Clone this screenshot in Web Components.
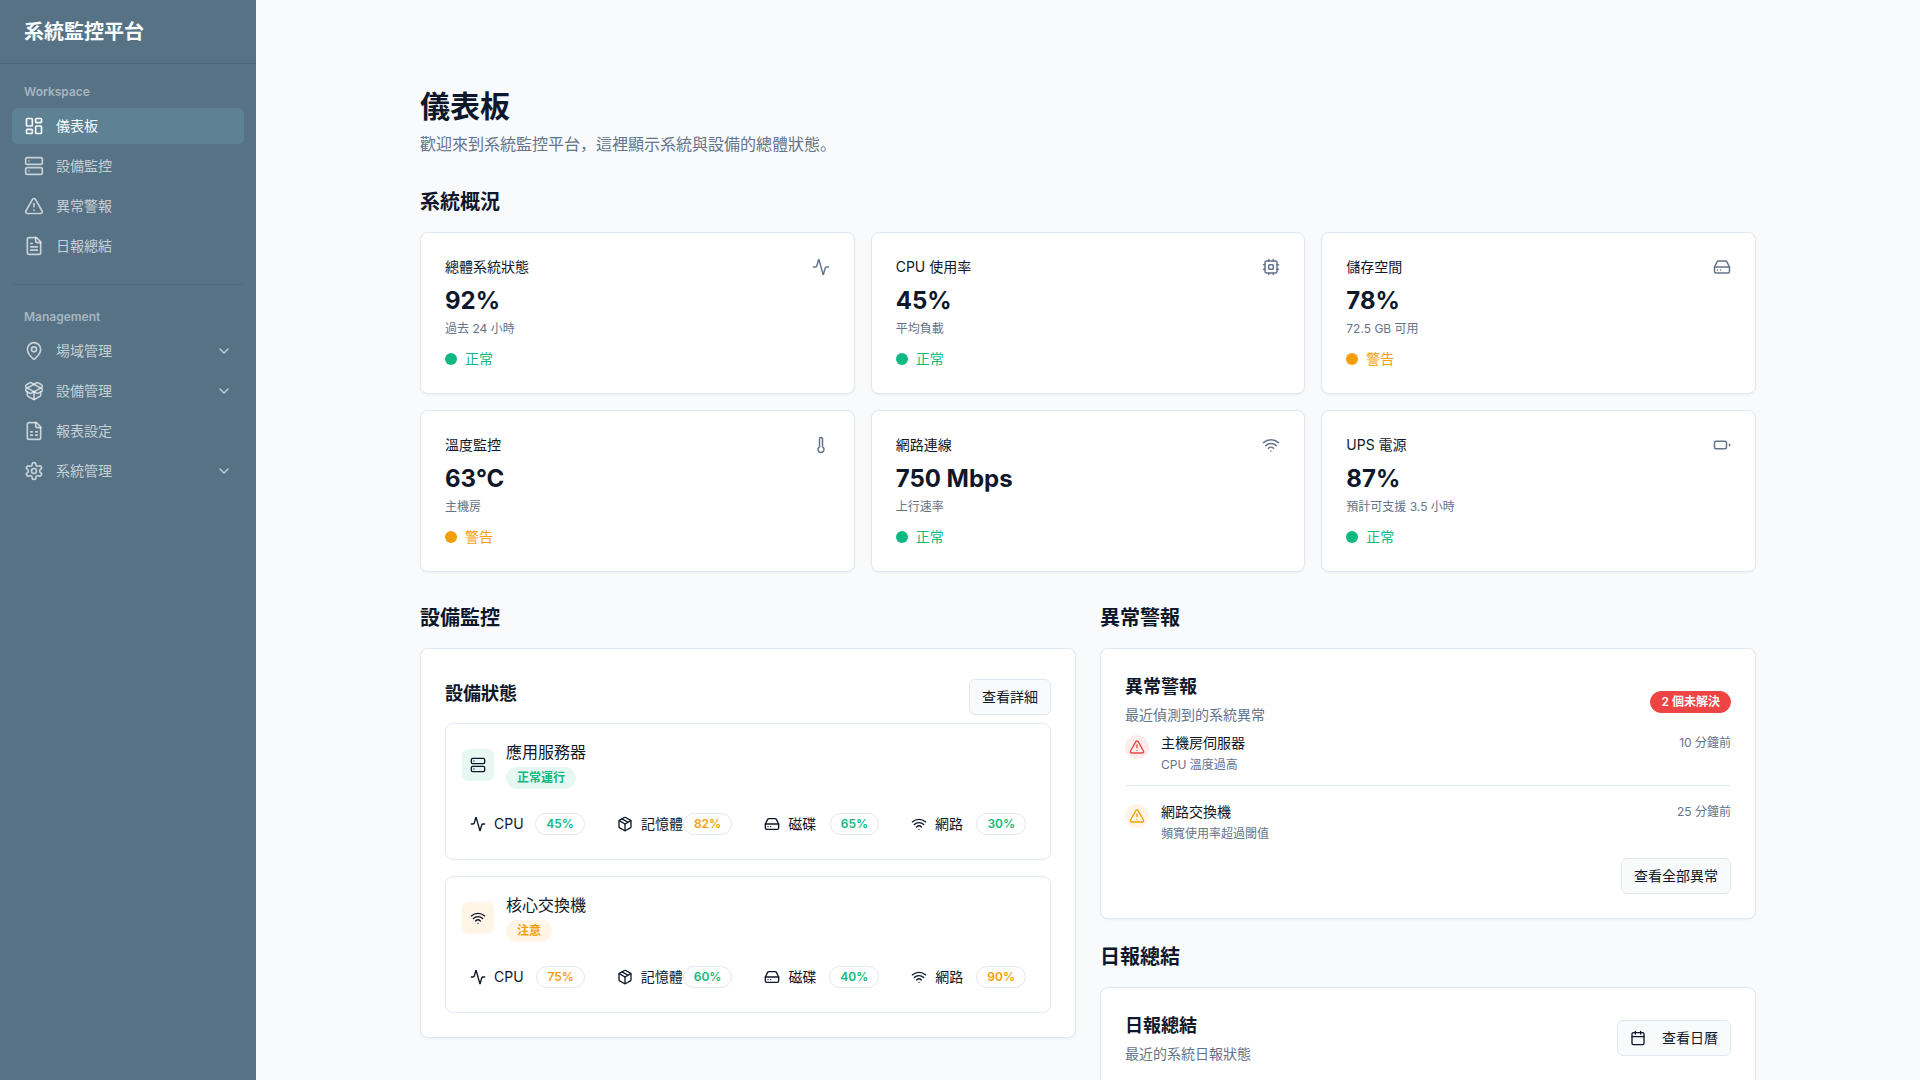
<!DOCTYPE html>
<html lang="en">
<head>
<meta charset="utf-8">
<meta name="viewport" content="width=device-width, initial-scale=1">
<title>系統監控平台</title>
<style>
    :root {
        --background: #f8fafc;
        --foreground: #0f172a;
        --card: #ffffff;
        --border: #e2e8f0;
        --muted: #64748b;
        --sidebar: #567284;
        --sidebar-active: #5e8193;
        --sidebar-border: #4b667a;
        --sidebar-divider: #506c7e;
        --success: #10b981;
        --success-soft: #e7f8f2;
        --warning: #f59e0b;
        --warning-soft: #fef5e7;
        --danger: #ef4444;
        --danger-soft: #fdecec;
    }

    body {
        margin: 0;
        background: var(--background);
        color: var(--foreground);
        font-family: Inter, "Noto Sans CJK JP", sans-serif;
        font-size: 14px;
        line-height: 20px;
    }
</style>
</head>
<body>
<dashboard-app></dashboard-app>

<script>
const ICONS = {
    dashboard: '<rect x="3" y="3" width="7" height="9" rx="1"/><rect x="14" y="3" width="7" height="5" rx="1"/><rect x="14" y="12" width="7" height="9" rx="1"/><rect x="3" y="16" width="7" height="5" rx="1"/>',
    server: '<rect x="2" y="2" width="20" height="8" rx="2"/><rect x="2" y="14" width="20" height="8" rx="2"/><path d="M6 6h.01M6 18h.01"/>',
    alert: '<path d="m21.73 18-8-14a2 2 0 0 0-3.48 0l-8 14A2 2 0 0 0 4 21h16a2 2 0 0 0 1.73-3"/><path d="M12 9v4M12 17h.01"/>',
    file: '<path d="M15 2H6a2 2 0 0 0-2 2v16a2 2 0 0 0 2 2h12a2 2 0 0 0 2-2V7Z"/><path d="M14 2v4a2 2 0 0 0 2 2h4M10 9H8M16 13H8M16 17H8"/>',
    sheet: '<path d="M15 2H6a2 2 0 0 0-2 2v16a2 2 0 0 0 2 2h12a2 2 0 0 0 2-2V7Z"/><path d="M14 2v4a2 2 0 0 0 2 2h4M8 13h2M14 13h2M8 17h2M14 17h2"/>',
    pin: '<path d="M20 10c0 4.993-5.539 10.193-7.399 11.799a1 1 0 0 1-1.202 0C9.539 20.193 4 14.993 4 10a8 8 0 0 1 16 0"/><circle cx="12" cy="10" r="3"/>',
    boxOpen: '<path d="M12 22v-9"/><path d="M15.17 2.21a1.67 1.67 0 0 1 1.63 0L21 4.57a1.93 1.93 0 0 1 0 3.36L8.82 14.79a1.655 1.655 0 0 1-1.64 0L3 12.43a1.93 1.93 0 0 1 0-3.36z"/><path d="M20 13v3.87a2.06 2.06 0 0 1-1.11 1.83l-6 3.08a1.93 1.93 0 0 1-1.78 0l-6-3.08A2.06 2.06 0 0 1 4 16.87V13"/><path d="M21 12.43a1.93 1.93 0 0 0 0-3.36L8.83 2.2a1.64 1.64 0 0 0-1.63 0L3 4.57a1.93 1.93 0 0 0 0 3.36l12.18 6.86a1.636 1.636 0 0 0 1.63 0z"/>',
    settings: '<path d="M12.22 2h-.44a2 2 0 0 0-2 2v.18a2 2 0 0 1-1 1.73l-.43.25a2 2 0 0 1-2 0l-.15-.08a2 2 0 0 0-2.73.73l-.22.38a2 2 0 0 0 .73 2.73l.15.1a2 2 0 0 1 1 1.72v.51a2 2 0 0 1-1 1.74l-.15.09a2 2 0 0 0-.73 2.73l.22.38a2 2 0 0 0 2.73.73l.15-.08a2 2 0 0 1 2 0l.43.25a2 2 0 0 1 1 1.73V20a2 2 0 0 0 2 2h.44a2 2 0 0 0 2-2v-.18a2 2 0 0 1 1-1.73l.43-.25a2 2 0 0 1 2 0l.15.08a2 2 0 0 0 2.73-.73l.22-.39a2 2 0 0 0-.73-2.73l-.15-.08a2 2 0 0 1-1-1.74v-.5a2 2 0 0 1 1-1.74l.15-.09a2 2 0 0 0 .73-2.73l-.22-.38a2 2 0 0 0-2.73-.73l-.15.08a2 2 0 0 1-2 0l-.43-.25a2 2 0 0 1-1-1.73V4a2 2 0 0 0-2-2z"/><circle cx="12" cy="12" r="3"/>',
    chevron: '<path d="m6 9 6 6 6-6"/>',
    activity: '<path d="M22 12h-2.48a2 2 0 0 0-1.93 1.46l-2.35 8.36a.25.25 0 0 1-.48 0L9.24 2.18a.25.25 0 0 0-.48 0l-2.35 8.36A2 2 0 0 1 4.49 12H2"/>',
    cpu: '<rect x="4" y="4" width="16" height="16" rx="2"/><rect x="9" y="9" width="6" height="6" rx="1"/><path d="M15 2v2M15 20v2M2 15h2M2 9h2M20 15h2M20 9h2M9 2v2M9 20v2"/>',
    drive: '<path d="M22 12H2"/><path d="M5.45 5.11 2 12v6a2 2 0 0 0 2 2h16a2 2 0 0 0 2-2v-6l-3.45-6.89A2 2 0 0 0 16.76 4H7.24a2 2 0 0 0-1.79 1.11z"/><path d="M6 16h.01M10 16h.01"/>',
    thermometer: '<path d="M14 4v10.54a4 4 0 1 1-4 0V4a2 2 0 0 1 4 0Z"/>',
    wifi: '<path d="M12 20h.01M2 8.82a15 15 0 0 1 20 0M5 12.859a10 10 0 0 1 14 0M8.5 16.429a5 5 0 0 1 7 0"/>',
    battery: '<rect x="2" y="7" width="16" height="10" rx="2"/><path d="M22 11v2"/>',
    memory: '<path d="M11 21.73a2 2 0 0 0 2 0l7-4A2 2 0 0 0 21 16V8a2 2 0 0 0-1-1.73l-7-4a2 2 0 0 0-2 0l-7 4A2 2 0 0 0 3 8v8a2 2 0 0 0 1 1.73z"/><path d="M12 22V12"/><path d="m3.3 7 8.7 5 8.7-5M7.5 4.27l9 5.15"/>',
    calendar: '<path d="M8 2v4M16 2v4M3 10h18"/><rect x="3" y="4" width="18" height="18" rx="2"/>'
};

class BaseElement extends HTMLElement {
    constructor() {
        super();
        this.attachShadow( { mode: 'open' } );
    }

    attr( name ) { return this.getAttribute( name ) || ''; }

    getTemplate() {
        const template = document.createElement( 'template' );
        template.innerHTML = `
            <style>
                *, :host { box-sizing: border-box; }
                h1, h2, h3, h4, p { margin: 0; }
                ${this.getStyles()}
            </style>
            ${this.getMarkup()}
        `
        return template;
    }

    getStyles() { return ''; }

    getMarkup() { return '<slot></slot>'; }

    connectedCallback() {
        if ( this.shadowRoot.childNodes.length ) return;
        this.shadowRoot.appendChild( this.getTemplate().content.cloneNode( true ) );
    }
}

class UiIcon extends BaseElement {
    getStyles() {
        return `
            :host { display: block; flex: none; width: var(--icon-size, 16px); height: var(--icon-size, 16px); }
            svg { display: block; width: 100%; height: 100%; }
        `
    }

    getMarkup() {
        return `
            <svg viewBox="0 0 24 24" fill="none" stroke="currentColor" stroke-width="2"
                stroke-linecap="round" stroke-linejoin="round" aria-hidden="true">${ICONS[this.attr( 'name' )]}</svg>
        `
    }
}

class UiButton extends BaseElement {
    getStyles() {
        return `
            :host { display: block; flex: none; }
            button {
                display: flex;
                align-items: center;
                gap: 16px;
                height: 36px;
                padding: 0 12px;
                border: 1px solid var(--border);
                border-radius: 6px;
                background: var(--background);
                color: var(--foreground);
                font: inherit;
                cursor: pointer;
            }
        `
    }

    getMarkup() {
        const icon = this.attr( 'icon' );
        return `<button type="button">${icon ? `<ui-icon name="${icon}"></ui-icon>` : ''}<slot></slot></button>`
    }
}

class UiBadge extends BaseElement {
    getStyles() {
        return `
            :host {
                display: inline-block;
                flex: none;
                padding: 2px 10px;
                border: 1px solid var(--border);
                border-radius: 11px;
                font-size: 12px;
                line-height: 16px;
                font-weight: 600;
                white-space: nowrap;
            }
            :host([tone="success"]) { color: var(--success); }
            :host([tone="warning"]) { color: var(--warning); }
            :host([soft]) { border-color: transparent; }
            :host([soft][tone="success"]) { background: var(--success-soft); }
            :host([soft][tone="warning"]) { background: var(--warning-soft); }
            :host([tone="danger"]) { background: var(--danger); border-color: var(--danger); color: #f8fafc; }
        `
    }
}

class NavItem extends BaseElement {
    getStyles() {
        return `
            :host { display: block; }
            a, button {
                display: flex;
                align-items: center;
                gap: 12px;
                width: 100%;
                height: 36px;
                padding: 0 12px;
                border: 0;
                border-radius: 6px;
                background: none;
                color: rgba(248, 250, 252, 0.7);
                font: inherit;
                text-align: left;
                text-decoration: none;
                cursor: pointer;
            }
            :host([active]) a { background: var(--sidebar-active); color: #f8fafc; }
            .icon { --icon-size: 20px; }
            .label { flex: 1; }
        `
    }

    getMarkup() {
        const content = `
            <ui-icon class="icon" name="${this.attr( 'icon' )}"></ui-icon>
            <span class="label"><slot></slot></span>
        `
        if ( this.hasAttribute( 'expandable' ) ) {
            return `<button type="button" aria-expanded="false">${content}<ui-icon name="chevron"></ui-icon></button>`
        }
        return `<a href="#${this.attr( 'icon' )}">${content}</a>`
    }
}

class NavGroup extends BaseElement {
    getStyles() {
        return `
            :host { display: block; padding: 20px 0; }
            :host([divided]) { padding-top: 24px; border-top: 1px solid var(--sidebar-divider); }
            .label {
                padding: 0 12px;
                margin-bottom: 8px;
                color: rgba(248, 250, 252, 0.5);
                font-size: 12px;
                line-height: 16px;
                font-weight: 600;
            }
            .items { display: grid; gap: 4px; }
        `
    }

    getMarkup() {
        return `
            <p class="label">${this.attr( 'label' )}</p>
            <div class="items"><slot></slot></div>
        `
    }
}

class SideBar extends BaseElement {
    getStyles() {
        return `
            :host { display: block; width: 256px; flex: none; background: var(--sidebar); }
            header {
                display: flex;
                align-items: center;
                height: 64px;
                padding: 0 24px;
                border-bottom: 1px solid var(--sidebar-border);
                color: #f8fafc;
                font-size: 20px;
                line-height: 28px;
                font-weight: 700;
            }
            nav { padding: 0 12px; }
        `
    }

    getMarkup() {
        return `
            <header>系統監控平台</header>
            <nav>
                <nav-group label="Workspace">
                    <nav-item icon="dashboard" active>儀表板</nav-item>
                    <nav-item icon="server">設備監控</nav-item>
                    <nav-item icon="alert">異常警報</nav-item>
                    <nav-item icon="file">日報總結</nav-item>
                </nav-group>
                <nav-group label="Management" divided>
                    <nav-item icon="pin" expandable>場域管理</nav-item>
                    <nav-item icon="boxOpen" expandable>設備管理</nav-item>
                    <nav-item icon="sheet">報表設定</nav-item>
                    <nav-item icon="settings" expandable>系統管理</nav-item>
                </nav-group>
            </nav>
        `
    }
}

class PageSection extends BaseElement {
    getStyles() {
        return `
            :host { display: block; }
            h2 { margin-bottom: 16px; font-size: 20px; line-height: 28px; font-weight: 600; }
        `
    }

    getMarkup() { return `<h2>${this.attr( 'heading' )}</h2><slot></slot>` }
}

class UiCard extends BaseElement {
    getStyles() {
        return `
            :host {
                display: block;
                padding: 24px;
                border: 1px solid var(--border);
                border-radius: 8px;
                background: var(--card);
                box-shadow: 0 1px 2px rgba(0, 0, 0, 0.05);
            }
            header { display: flex; align-items: center; justify-content: space-between; margin-bottom: 8px; }
            h3 { font-size: 18px; line-height: 28px; font-weight: 600; }
            p { margin-top: 4px; color: var(--muted); }
            ::slotted(.lowered) { margin-top: 6px; }
        `
    }

    getMarkup() {
        const description = this.attr( 'description' );
        return `
            <header>
                <div>
                    <h3>${this.attr( 'heading' )}</h3>
                    ${description ? `<p>${description}</p>` : ''}
                </div>
                <slot name="action"></slot>
            </header>
            <slot></slot>
        `
    }
}

class StatCard extends BaseElement {
    getStyles() {
        return `
            :host {
                display: block;
                padding: 24px;
                border: 1px solid var(--border);
                border-radius: 8px;
                background: var(--card);
                box-shadow: 0 1px 2px rgba(0, 0, 0, 0.05);
            }
            header { display: flex; align-items: center; justify-content: space-between; margin-bottom: 8px; }
            h3 { font-size: 14px; line-height: 20px; font-weight: 400; }
            ui-icon { --icon-size: 18px; color: var(--muted); }
            .value { font-size: 24px; line-height: 32px; font-weight: 700; }
            .note { margin-top: 4px; color: var(--muted); font-size: 12px; line-height: 16px; }
            .status { display: flex; align-items: center; gap: 8px; margin-top: 12px; color: var(--success); }
            .status::before { content: ""; width: 12px; height: 12px; border-radius: 50%; background: currentColor; }
            :host([tone="warning"]) .status { color: var(--warning); }
        `
    }

    getMarkup() {
        return `
            <header>
                <h3>${this.attr( 'heading' )}</h3>
                <ui-icon name="${this.attr( 'icon' )}"></ui-icon>
            </header>
            <div class="value">${this.attr( 'value' )}</div>
            <p class="note">${this.attr( 'note' )}</p>
            <div class="status">${this.attr( 'tone' ) === 'warning' ? '警告' : '正常'}</div>
        `
    }
}

class DeviceMetric extends BaseElement {
    getStyles() {
        return `
            :host { display: flex; align-items: center; justify-content: space-between; padding: 8px; }
            .name { display: flex; align-items: center; gap: 8px; white-space: nowrap; }
        `
    }

    getMarkup() {
        return `
            <span class="name"><ui-icon name="${this.attr( 'icon' )}"></ui-icon>${this.attr( 'label' )}</span>
            <ui-badge tone="${this.attr( 'tone' )}"><slot></slot></ui-badge>
        `
    }
}

class DeviceCard extends BaseElement {
    getStyles() {
        return `
            :host { display: block; padding: 16px; border: 1px solid var(--border); border-radius: 8px; }
            header { display: flex; align-items: center; gap: 12px; }
            .tile {
                display: grid;
                place-items: center;
                width: 32px;
                height: 32px;
                border-radius: 6px;
                background: var(--success-soft);
            }
            :host([tone="warning"]) .tile { background: var(--warning-soft); }
            .title { display: grid; justify-items: start; gap: 3px; }
            h4 { font-size: 16px; line-height: 24px; font-weight: 400; }
            .metrics { display: grid; grid-template-columns: repeat(4, 1fr); gap: 16px; margin-top: 16px; }
        `
    }

    getMarkup() {
        return `
            <header>
                <div class="tile"><ui-icon name="${this.attr( 'icon' )}"></ui-icon></div>
                <div class="title">
                    <h4>${this.attr( 'name' )}</h4>
                    <ui-badge soft tone="${this.attr( 'tone' )}">${this.attr( 'status' )}</ui-badge>
                </div>
            </header>
            <div class="metrics"><slot></slot></div>
        `
    }
}

class AlertItem extends BaseElement {
    getStyles() {
        return `
            :host { display: flex; align-items: flex-start; gap: 12px; }
            :host([divided]) { padding-bottom: 12px; margin-bottom: 16px; border-bottom: 1px solid var(--border); }
            .mark {
                display: grid;
                place-items: center;
                width: 24px;
                height: 24px;
                margin-top: 2px;
                border-radius: 50%;
                background: var(--danger-soft);
                color: var(--danger);
            }
            :host([tone="warning"]) .mark { background: var(--warning-soft); color: var(--warning); }
            .text { flex: 1; }
            h4 { font-size: 14px; line-height: 20px; font-weight: 400; }
            p { margin-top: 4px; color: var(--muted); font-size: 12px; line-height: 16px; }
            time { color: var(--muted); font-size: 12px; line-height: 20px; }
        `
    }

    getMarkup() {
        return `
            <div class="mark"><ui-icon name="alert"></ui-icon></div>
            <div class="text">
                <h4>${this.attr( 'heading' )}</h4>
                <p><slot></slot></p>
            </div>
            <time>${this.attr( 'time' )}</time>
        `
    }
}

class DashboardApp extends BaseElement {
    getStyles() {
        return `
            :host { display: flex; height: 100vh; }
            main { flex: 1; min-width: 0; overflow-y: auto; scrollbar-width: none; }
            .container {
                display: grid;
                gap: 32px;
                max-width: 1400px;
                margin: 0 auto;
                padding: 88px 32px 32px;
            }
            h1 { font-size: 30px; line-height: 36px; font-weight: 700; }
            .intro { margin-top: 8px; color: var(--muted); font-size: 16px; line-height: 24px; }
            .stats { display: grid; grid-template-columns: repeat(3, 1fr); gap: 16px; }
            .columns { display: grid; grid-template-columns: 1fr 1fr; align-items: start; gap: 24px; }
            .stack { display: grid; gap: 24px; }
            .devices { display: grid; gap: 16px; }
            .footer { display: flex; justify-content: flex-end; margin-top: 16px; }
        `
    }

    getMarkup() {
        return `
            <side-bar></side-bar>
            <main>
                <div class="container">
                    <div>
                        <h1>儀表板</h1>
                        <p class="intro">歡迎來到系統監控平台，這裡顯示系統與設備的總體狀態。</p>
                    </div>

                    <page-section heading="系統概況">
                        <div class="stats">
                            <stat-card heading="總體系統狀態" icon="activity" value="92%" note="過去 24 小時"></stat-card>
                            <stat-card heading="CPU 使用率" icon="cpu" value="45%" note="平均負載"></stat-card>
                            <stat-card heading="儲存空間" icon="drive" value="78%" note="72.5 GB 可用" tone="warning"></stat-card>
                            <stat-card heading="溫度監控" icon="thermometer" value="63°C" note="主機房" tone="warning"></stat-card>
                            <stat-card heading="網路連線" icon="wifi" value="750 Mbps" note="上行速率"></stat-card>
                            <stat-card heading="UPS 電源" icon="battery" value="87%" note="預計可支援 3.5 小時"></stat-card>
                        </div>
                    </page-section>

                    <div class="columns">
                        <page-section heading="設備監控">
                            <ui-card heading="設備狀態">
                                <ui-button slot="action" class="lowered">查看詳細</ui-button>
                                <div class="devices">
                                    <device-card name="應用服務器" icon="server" status="正常運行" tone="success">
                                        <device-metric icon="activity" label="CPU" tone="success">45%</device-metric>
                                        <device-metric icon="memory" label="記憶體" tone="warning">82%</device-metric>
                                        <device-metric icon="drive" label="磁碟" tone="success">65%</device-metric>
                                        <device-metric icon="wifi" label="網路" tone="success">30%</device-metric>
                                    </device-card>
                                    <device-card name="核心交換機" icon="wifi" status="注意" tone="warning">
                                        <device-metric icon="activity" label="CPU" tone="warning">75%</device-metric>
                                        <device-metric icon="memory" label="記憶體" tone="success">60%</device-metric>
                                        <device-metric icon="drive" label="磁碟" tone="success">40%</device-metric>
                                        <device-metric icon="wifi" label="網路" tone="warning">90%</device-metric>
                                    </device-card>
                                </div>
                            </ui-card>
                        </page-section>

                        <div class="stack">
                            <page-section heading="異常警報">
                                <ui-card heading="異常警報" description="最近偵測到的系統異常">
                                    <ui-badge slot="action" class="lowered" tone="danger">2 個未解決</ui-badge>
                                    <alert-item heading="主機房伺服器" time="10 分鐘前" divided>CPU 溫度過高</alert-item>
                                    <alert-item heading="網路交換機" time="25 分鐘前" tone="warning">頻寬使用率超過閾值</alert-item>
                                    <div class="footer"><ui-button>查看全部異常</ui-button></div>
                                </ui-card>
                            </page-section>
                            <page-section heading="日報總結">
                                <ui-card heading="日報總結" description="最近的系統日報狀態">
                                    <ui-button slot="action" icon="calendar">查看日曆</ui-button>
                                </ui-card>
                            </page-section>
                        </div>
                    </div>
                </div>
            </main>
        `
    }
}

customElements.define( 'ui-icon', UiIcon );
customElements.define( 'ui-button', UiButton );
customElements.define( 'ui-badge', UiBadge );
customElements.define( 'nav-item', NavItem );
customElements.define( 'nav-group', NavGroup );
customElements.define( 'side-bar', SideBar );
customElements.define( 'page-section', PageSection );
customElements.define( 'ui-card', UiCard );
customElements.define( 'stat-card', StatCard );
customElements.define( 'device-metric', DeviceMetric );
customElements.define( 'device-card', DeviceCard );
customElements.define( 'alert-item', AlertItem );
customElements.define( 'dashboard-app', DashboardApp );
</script>
</body>
</html>
